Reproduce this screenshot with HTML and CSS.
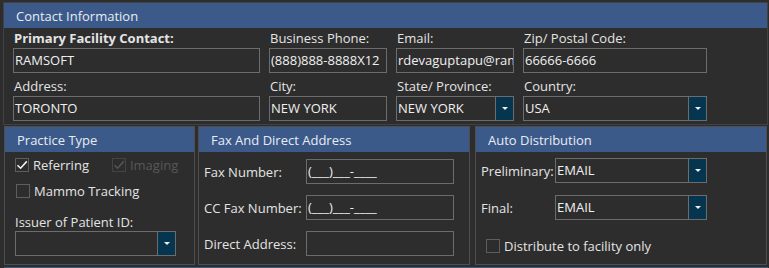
FILE: index.html
```html
<!DOCTYPE html>
<html lang="en">

<head>
    <meta charset="UTF-8">
    <meta name="viewport" content="width=device-width, initial-scale=1.0">
    <title>Facility - Contact Information</title>
    <link rel="stylesheet" href="styles.css">
</head>

<body>
    <div class="page">
        <div class="panel contact">
            <div class="panel-title">Contact Information</div>
            <div class="contact-grid">
                <div class="field">
                    <div class="label strong">Primary Facility Contact:</div>
                    <div class="textbox">RAMSOFT</div>
                </div>
                <div class="field">
                    <div class="label">Business Phone:</div>
                    <div class="textbox">(888)888-8888X12</div>
                </div>
                <div class="field">
                    <div class="label">Email:</div>
                    <div class="textbox">rdevaguptapu@ram</div>
                </div>
                <div class="field">
                    <div class="label">Zip/ Postal Code:</div>
                    <div class="textbox">66666-6666</div>
                </div>
                <div class="field second">
                    <div class="label">Address:</div>
                    <div class="textbox">TORONTO</div>
                </div>
                <div class="field second">
                    <div class="label">City:</div>
                    <div class="textbox">NEW YORK</div>
                </div>
                <div class="field second">
                    <div class="label">State/ Province:</div>
                    <div class="combo"><span class="combo-text">NEW YORK</span><span class="combo-btn"></span></div>
                </div>
                <div class="field second">
                    <div class="label">Country:</div>
                    <div class="combo"><span class="combo-text">USA</span><span class="combo-btn"></span></div>
                </div>
            </div>
        </div>

        <div class="group-row">
            <div class="panel practice">
                <div class="panel-title">Practice Type</div>
                <div class="panel-body">
                    <div class="check-row">
                        <span class="check checked"><svg viewBox="0 0 14 14" width="14" height="14"><path d="M2.5 7.2 L5.6 10.2 L11.8 3.4" fill="none" stroke="#f2f2f2" stroke-width="1.6"/></svg></span>
                        <span class="check-label">Referring</span>
                        <span class="check checked disabled"><svg viewBox="0 0 14 14" width="14" height="14"><path d="M2.5 7.2 L5.6 10.2 L11.8 3.4" fill="none" stroke="#555" stroke-width="1.6"/></svg></span>
                        <span class="check-label disabled">Imaging</span>
                    </div>
                    <div class="check-row mammo">
                        <span class="check"></span>
                        <span class="check-label">Mammo Tracking</span>
                    </div>
                    <div class="label issuer">Issuer of Patient ID:</div>
                    <div class="combo issuer-combo"><span class="combo-text"></span><span class="combo-btn"></span></div>
                </div>
            </div>

            <div class="panel fax">
                <div class="panel-title">Fax And Direct Address</div>
                <div class="panel-body">
                    <div class="form-row">
                        <span class="row-label">Fax Number:</span>
                        <div class="textbox">(___)___-____</div>
                    </div>
                    <div class="form-row">
                        <span class="row-label">CC Fax Number:</span>
                        <div class="textbox">(___)___-____</div>
                    </div>
                    <div class="form-row">
                        <span class="row-label">Direct Address:</span>
                        <div class="textbox"></div>
                    </div>
                </div>
            </div>

            <div class="panel auto">
                <div class="panel-title">Auto Distribution</div>
                <div class="panel-body">
                    <div class="form-row">
                        <span class="row-label">Preliminary:</span>
                        <div class="combo"><span class="combo-text">EMAIL</span><span class="combo-btn"></span></div>
                    </div>
                    <div class="form-row">
                        <span class="row-label">Final:</span>
                        <div class="combo"><span class="combo-text">EMAIL</span><span class="combo-btn"></span></div>
                    </div>
                    <div class="check-row facility">
                        <span class="check"></span>
                        <span class="check-label">Distribute to facility only</span>
                    </div>
                </div>
            </div>
        </div>

        <div class="next-title"></div>
    </div>
</body>

</html>
```

FILE: styles.css
```css
/* Facility contact form */
body {
    margin: 0;
    padding: 0;
    width: 769px;
    height: 268px;
    overflow: hidden;
    font-family: 'Open Sans', 'Noto Sans', sans-serif;
    font-size: 13px;
    background-color: #2d2d2d;
    color: #e4e4e4;
}

.page {
    padding: 2px 1px 0 3px;
}

.panel {
    border: 1px solid #414141;
    box-sizing: border-box;
}

.panel-title {
    height: 25px;
    line-height: 27px;
    padding-left: 12px;
    background-color: #3b5a8a;
    color: #e8ecf2;
    white-space: nowrap;
}

/* top section */
.contact {
    height: 123px;
}

.contact-grid {
    display: grid;
    grid-template-columns: 247px 118px 118px 184px;
    column-gap: 9px;
    padding-left: 9px;
}

.label {
    height: 20px;
    line-height: 20px;
    padding-left: 1px;
    white-space: nowrap;
}

.label.strong {
    font-weight: bold;
}

.field.second .label {
    margin-top: 3px;
}

.textbox,
.combo {
    height: 25px;
    box-sizing: border-box;
    border: 1px solid #6c6c6c;
    line-height: 23px;
    padding-left: 1px;
    color: #f0f0f0;
    white-space: nowrap;
    overflow: hidden;
}

.combo {
    display: flex;
    padding-left: 0;
}

.combo-text {
    flex: 1;
    padding-left: 1px;
    overflow: hidden;
}

.combo-btn {
    width: 17px;
    background-color: #063550;
    border-left: 1px solid #6c6c6c;
    display: flex;
    align-items: center;
    justify-content: center;
}

.combo-btn::after {
    content: '';
    border-left: 3px solid transparent;
    border-right: 3px solid transparent;
    border-top: 3px solid #f0f0f0;
}

/* lower groups */
.group-row {
    display: flex;
    padding-left: 1px;
    margin-top: 1px;
}

.group-row .panel {
    height: 139px;
    border-color: #4e4e4e;
}

.practice {
    width: 191px;
}

.fax {
    width: 272px;
    margin-left: 3px;
}

.auto {
    width: 292px;
    margin-left: 5px;
}

.panel-body {
    padding: 0 5px;
}

.check-row {
    display: flex;
    align-items: center;
    height: 16px;
}

.check {
    width: 14px;
    height: 14px;
    box-sizing: border-box;
    border: 1px solid #5e5e5e;
    display: flex;
    align-items: center;
    justify-content: center;
}

.check svg {
    flex: none;
}

.check.disabled {
    border-color: #444;
}

.check-label {
    margin-left: 4px;
    white-space: nowrap;
}

.check-label.disabled {
    color: #585858;
}

.practice .panel-body {
    padding: 5px 0 0 10px;
}

.practice .check.disabled {
    margin-left: 23px;
}

.practice .mammo {
    margin-top: 10px;
    padding-left: 1px;
}

.label.issuer {
    margin-top: 14px;
    height: 18px;
    line-height: 18px;
    padding-left: 0;
}

.issuer-combo {
    width: 161px;
    margin-top: 0;
}

.form-row {
    display: flex;
    align-items: center;
    height: 25px;
}

.row-label {
    white-space: nowrap;
}

.fax .panel-body {
    padding: 7px 0 0 5px;
}

.fax .form-row + .form-row {
    margin-top: 11px;
}

.fax .row-label {
    width: 102px;
}

.fax .textbox {
    width: 148px;
}

.auto .panel-body {
    padding: 6px 0 0 5px;
}

.auto .form-row + .form-row {
    margin-top: 12px;
}

.auto .row-label {
    width: 74px;
}

.auto .combo {
    width: 152px;
}

.auto .facility {
    margin-top: 18px;
    padding-left: 5px;
}

.next-title {
    margin-top: 2px;
    height: 4px;
    margin-left: 1px;
    background-color: #3b5a8a;
}
```
